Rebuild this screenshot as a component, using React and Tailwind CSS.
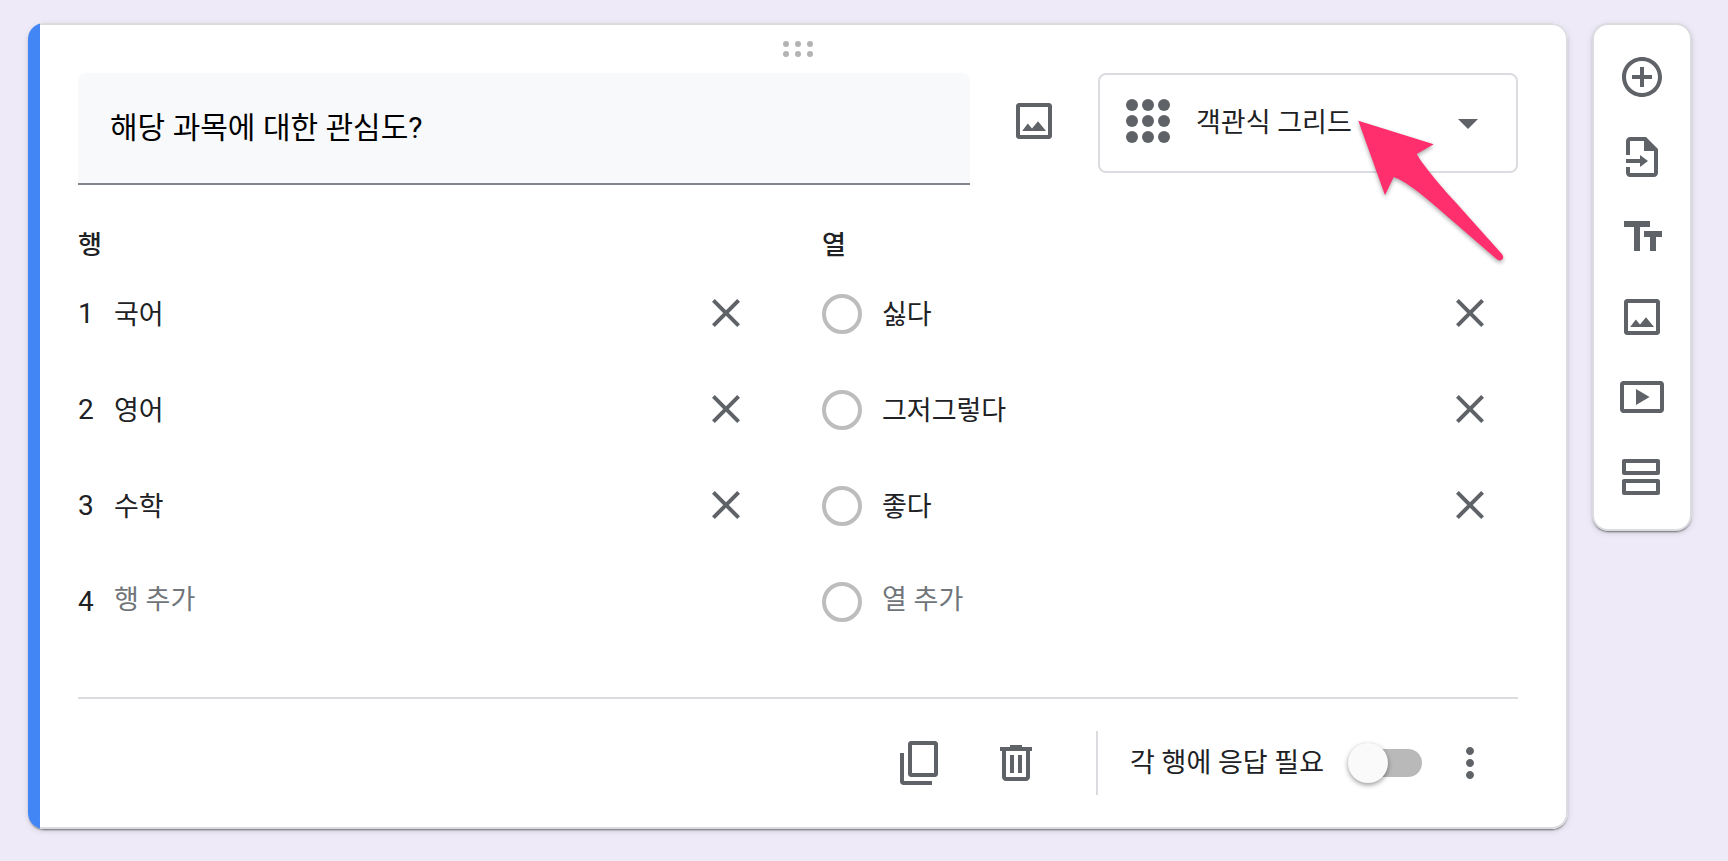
import React from "react";

const rows = ["국어", "영어", "수학"];
const columns = ["싫다", "그저그렇다", "좋다"];

const paths = {
  image:
    "M19.5 3h-15C3.67 3 3 3.67 3 4.5v15c0 .83.67 1.5 1.5 1.5h15c.83 0 1.5-.67 1.5-1.5v-15c0-.83-.67-1.5-1.5-1.5zM19 19H5V5h14v14zM14 12.1l-3 3.7-2.1-2.6L6.1 17H18z",
  close:
    "M19 6.41L17.59 5 12 10.59 6.41 5 5 6.41 10.59 12 5 17.59 6.41 19 12 13.41 17.59 19 19 17.59 13.41 12z",
  copy: "M19.5 1h-12C6.67 1 6 1.67 6 2.5v15c0 .83.67 1.5 1.5 1.5h12c.83 0 1.5-.67 1.5-1.5v-15c0-.83-.67-1.5-1.5-1.5zM19 17H8V3h11v14zM4 7H2v14.2c0 1 .8 1.8 1.8 1.8H18v-2H4z",
  trash:
    "M15 4V3H9v1H4v2h1v13c0 1.1.9 2 2 2h10c1.1 0 2-.9 2-2V6h1V4h-5zm2 15H7V6h10v13zM9 8h2v9H9zm4 0h2v9h-2z",
  more: "M12 8c1.1 0 2-.9 2-2s-.9-2-2-2-2 .9-2 2 .9 2 2 2zm0 2c-1.1 0-2 .9-2 2s.9 2 2 2 2-.9 2-2-.9-2-2-2zm0 6c-1.1 0-2 .9-2 2s.9 2 2 2 2-.9 2-2-.9-2-2-2z",
  drop: "M7 10l5 5 5-5z",
  add: "M13 7h-2v4H7v2h4v4h2v-4h4v-2h-4V7zm-1-5C6.48 2 2 6.48 2 12s4.48 10 10 10 10-4.48 10-10S17.52 2 12 2zm0 18c-4.41 0-8-3.59-8-8s3.59-8 8-8 8 3.59 8 8-3.59 8-8 8z",
  importDoc:
    "M14 2H6c-1.1 0-2 .9-2 2v7h2V4h7v5h5v11H6v-3H4v3c0 1.1.9 2 2 2h12c1.1 0 2-.9 2-2V8l-6-6zM11 11v2H4v2h7v2l4-3z",
  text: "M3 4v3h5v12h3V7h5V4H3zm19 5h-9v3h3v7h3v-7h3V9z",
  video:
    "M21.3 4H2.7C1.76 4 1 4.76 1 5.7v12.6c0 .94.76 1.7 1.7 1.7h18.6c.94 0 1.7-.76 1.7-1.7V5.7c0-.94-.76-1.7-1.7-1.7zM21 18H3V6h18v12zM9 8v8l6.8-4z",
  section:
    "M20 3H3c-.55 0-1 .45-1 1v6c0 .55.45 1 1 1h17c.55 0 1-.45 1-1V4c0-.55-.45-1-1-1zm-1 6H4V5h15v4zM20 13H3c-.55 0-1 .45-1 1v6c0 .55.45 1 1 1h17c.55 0 1-.45 1-1v-6c0-.55-.45-1-1-1zm-1 6H4v-4h15v4z",
};

function Icon({ name }) {
  return (
    <svg viewBox="0 0 24 24" className="size-12 shrink-0 fill-[#5f6368]" aria-hidden="true">
      <path fillRule="evenodd" d={paths[name]} />
    </svg>
  );
}

function IconButton({ name, label, className = "w-24 h-24" }) {
  return (
    <button type="button" aria-label={label} className={`flex shrink-0 items-center justify-center ${className}`}>
      <Icon name={name} />
    </button>
  );
}

function Option({ lead, value, placeholder, label }) {
  return (
    <li className="flex h-24 items-center">
      {lead}
      <input
        type="text"
        aria-label={label}
        defaultValue={value}
        placeholder={placeholder}
        className="h-12 min-w-0 flex-1 bg-transparent pb-1 text-[27px] leading-10 text-[#202124] outline-none placeholder:text-[#70757a]"
      />
      {value && <IconButton name="close" label={`${value} 삭제`} className="h-24 w-24 pb-[2px]" />}
    </li>
  );
}

const RowNumber = ({ n }) => <span className="w-9 shrink-0 text-[28px]">{n}</span>;

const Radio = ({ label }) => (
  <input
    type="radio"
    name="column"
    aria-label={label}
    className="mr-5 size-10 shrink-0 appearance-none rounded-full border-4 border-[#bdbdbd]"
  />
);

function Grip() {
  return (
    <svg viewBox="0 0 30 16" className="h-4 w-[30px] fill-[#b3b3b3]" aria-hidden="true">
      {[3, 15, 27].map((x) => (
        <React.Fragment key={x}>
          <circle cx={x} cy="3" r="3" />
          <circle cx={x} cy="13" r="3" />
        </React.Fragment>
      ))}
    </svg>
  );
}

function GridIcon() {
  return (
    <svg viewBox="0 0 44 44" className="mb-1 size-11 fill-[#5f6368]" aria-hidden="true">
      {[6, 22, 38].map((y) => [6, 22, 38].map((x) => <circle key={`${x}-${y}`} cx={x} cy={y} r="6" />))}
    </svg>
  );
}

function TypeSelect() {
  return (
    <div className="relative grid w-[420px] shrink-0 self-start">
      <select
        aria-label="질문 유형"
        className="col-start-1 row-start-1 h-[100px] appearance-none rounded-lg border-2 border-[#dadce0] bg-white pl-24 text-[27px] text-[#202124]"
      >
        <option>객관식 그리드</option>
      </select>
      <div className="pointer-events-none col-start-1 row-start-1 flex h-[100px] items-center justify-between pr-[26px] pl-7">
        <GridIcon />
        <Icon name="drop" />
      </div>
      <svg
        viewBox="0 0 160 160"
        className="pointer-events-none absolute top-10 left-64 size-40 fill-[#ff2f6d] drop-shadow-[0_2px_2px_rgba(0,0,0,0.35)]"
        aria-hidden="true"
      >
        <path d="M4.3 7.7L79.7 31.3L62.7 41C70 54 92 79 100 87.500L148.300 141.500Q150.500 145 147.500 147Q145 148.300 142.500 146L83 94.500C70 83 50 67 39.700 64L31 82.300Z" />
      </svg>
    </div>
  );
}

function Toolbar() {
  const items = [
    ["add", "질문 추가"],
    ["importDoc", "질문 가져오기"],
    ["text", "제목 및 설명 추가"],
    ["image", "이미지 추가"],
    ["video", "동영상 추가"],
    ["section", "섹션 추가"],
  ];
  return (
    <nav
      aria-label="도구"
      className="flex w-[100px] shrink-0 flex-col rounded-2xl border-2 border-[#dadce0] bg-white py-3 shadow-[0_2px_2px_-1px_rgba(0,0,0,0.5),0_2px_6px_rgba(0,0,0,0.12)]"
    >
      {items.map(([name, label]) => (
        <IconButton key={name} name={name} label={label} className="h-20 w-full" />
      ))}
    </nav>
  );
}

export default function App() {
  return (
    <div className="min-h-screen bg-[#eeeaf8] pt-[23px] pr-9 pb-8 pl-7 font-[Roboto,'Noto_Sans_CJK_KR',sans-serif] text-[27px] text-[#202124]">
      <div className="flex items-start gap-6">
        <main className="flex min-w-0 flex-1 overflow-hidden rounded-2xl bg-white shadow-[0_2px_2px_-1px_rgba(0,0,0,0.5),0_2px_6px_rgba(0,0,0,0.12)]">
          <div className="w-3 shrink-0 bg-[#4285f4]" />
          <div className="min-w-0 flex-1 rounded-r-2xl border-2 border-l-0 border-[#dadce0] pr-12 pl-[38px]">
            <div className="flex h-12 items-center justify-center">
              <Grip />
            </div>

            <div className="flex">
              <input
                type="text"
                aria-label="질문"
                defaultValue="해당 과목에 대한 관심도?"
                className="h-28 min-w-0 flex-1 rounded-t-lg border-b-2 border-[#80868b] bg-[#f8f9fb] px-8 pb-[6px] text-[30px] text-black outline-none"
              />
              <IconButton name="image" label="이미지 추가" className="h-24 w-32" />
              <TypeSelect />
            </div>

            <div className="mt-10 mb-[47px] grid grid-cols-2 gap-12">
              <section>
                <h2 className="mb-px text-[26px] leading-10 font-medium">행</h2>
                <ol>
                  {rows.map((r, i) => (
                    <Option key={r} lead={<RowNumber n={i + 1} />} value={r} label={`행 ${i + 1}`} />
                  ))}
                  <Option lead={<RowNumber n={4} />} placeholder="행 추가" label="행 추가" />
                </ol>
              </section>
              <section>
                <h2 className="mb-px text-[26px] leading-10 font-medium">열</h2>
                <ul>
                  {columns.map((c, i) => (
                    <Option key={c} lead={<Radio label={c} />} value={c} label={`열 ${i + 1}`} />
                  ))}
                  <Option lead={<Radio label="열 추가" />} placeholder="열 추가" label="열 추가" />
                </ul>
              </section>
            </div>

            <footer className="flex h-32 box-content items-center justify-end border-t-2 border-[#dadce0]">
              <IconButton name="copy" label="복사" />
              <IconButton name="trash" label="삭제" />
              <div className="mr-8 ml-8 h-16 w-[2px] bg-[#dadce0]" />
              <label htmlFor="required" className="mr-6">
                각 행에 응답 필요
              </label>
              <input
                id="required"
                type="checkbox"
                role="switch"
                className="grid w-[74px] shrink-0 appearance-none items-center before:col-start-1 before:row-start-1 before:ml-1 before:h-7 before:rounded-full before:bg-[#b9b9b9] after:col-start-1 after:row-start-1 after:size-10 after:rounded-full after:bg-[#fafafa] after:shadow-[0_2px_5px_rgba(0,0,0,0.4)] checked:after:justify-self-end"
              />
              <IconButton name="more" label="옵션 더보기" />
            </footer>
          </div>
        </main>
        <Toolbar />
      </div>
    </div>
  );
}
